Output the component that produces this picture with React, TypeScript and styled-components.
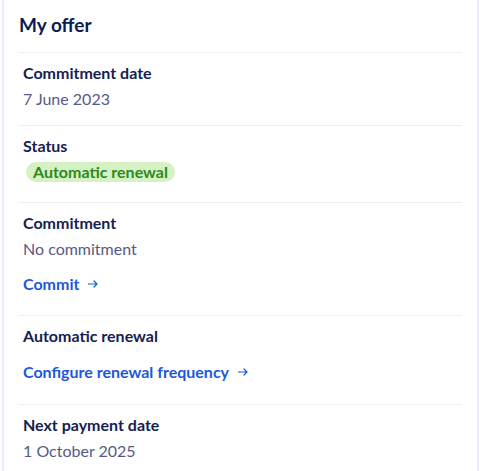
import styled, { createGlobalStyle } from "styled-components";

const GlobalStyle = createGlobalStyle`
  html, body {
    margin: 0;
    padding: 0;
    background: #ffffff;
    font-family: Lato, "Noto Sans", sans-serif;
  }
`;

const Card = styled.section`
  width: 477px;
  margin-left: 2px;
  box-sizing: border-box;
  border-left: 2px solid #ececfb;
  border-right: 2px solid #ececfb;
  background: #ffffff;
  padding: 0 15px;
  min-height: 471px;
`;

const Title = styled.h2`
  margin: 0;
  padding: 12px 0 0;
  height: 40px;
  font-size: 19px;
  line-height: 26px;
  font-weight: 700;
  color: #0c1a55;
`;

const Item = styled.div<{ $bottom?: number }>`
  display: flex;
  flex-direction: column;
  align-items: flex-start;
  gap: 6px;
  padding: 10px 4px ${(p) => p.$bottom ?? 20}px;
  border-top: 1px solid #eceef3;
`;

const Label = styled.div`
  font-size: 16px;
  line-height: 20px;
  font-weight: 700;
  color: #16214f;
`;

const Value = styled.div`
  font-size: 16px;
  line-height: 20px;
  color: #555a86;
`;

const Badge = styled.span`
  margin-left: 3px;
  padding: 0 7px;
  height: 20px;
  border-radius: 10px;
  background: #d6f1c4;
  color: #2d8a1c;
  font-size: 16px;
  line-height: 20px;
  font-weight: 700;
`;

const Action = styled.a<{ $space?: number }>`
  display: inline-flex;
  align-items: center;
  gap: 9px;
  margin-top: ${(p) => p.$space ?? 0}px;
  font-size: 16px;
  line-height: 20px;
  font-weight: 700;
  color: #1d58d8;
  text-decoration: none;
  cursor: pointer;
`;

function Arrow() {
  return (
    <svg width="10" height="8" viewBox="0 0 10 8" fill="none">
      <path
        d="M0.5 4H9M6 1L9 4L6 7"
        stroke="#1d58d8"
        strokeWidth="1.2"
        strokeLinecap="round"
        strokeLinejoin="round"
      />
    </svg>
  );
}

export default function App() {
  return (
    <>
      <GlobalStyle />
      <Card>
        <Title>My offer</Title>
        <Item $bottom={16}>
          <Label>Commitment date</Label>
          <Value>7 June 2023</Value>
        </Item>
        <Item $bottom={20}>
          <Label>Status</Label>
          <Badge>Automatic renewal</Badge>
        </Item>
        <Item $bottom={21}>
          <Label>Commitment</Label>
          <Value>No commitment</Value>
          <Action $space={9}>
            Commit <Arrow />
          </Action>
        </Item>
        <Item $bottom={22}>
          <Label>Automatic renewal</Label>
          <Action $space={10}>
            Configure renewal frequency <Arrow />
          </Action>
        </Item>
        <Item>
          <Label>Next payment date</Label>
          <Value>1 October 2025</Value>
        </Item>
      </Card>
    </>
  );
}
